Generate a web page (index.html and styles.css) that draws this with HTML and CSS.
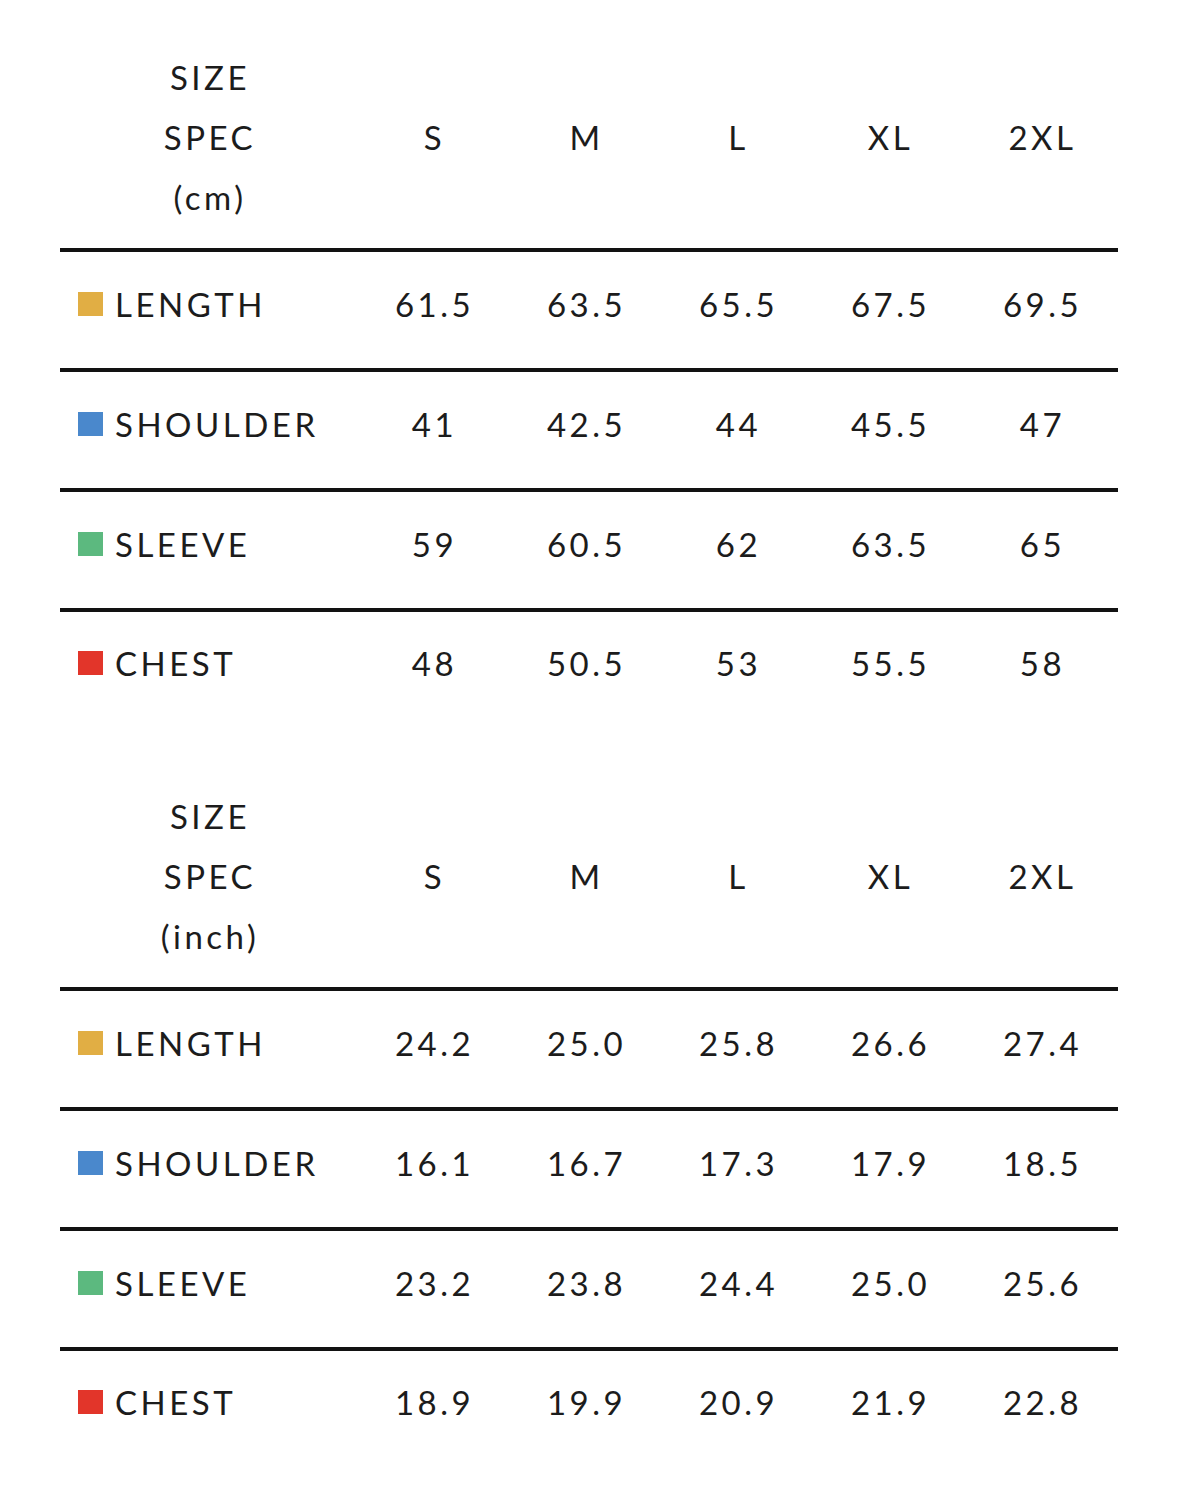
FILE: index.html
```html
<!DOCTYPE html>
<html>
<head>
<meta charset="utf-8">
<link rel="stylesheet" href="styles.css">
</head>
<body>
<div class="page">
  <section class="spec spec-cm">
    <div class="head">
      <div class="title"><span>SIZE</span><span>SPEC</span><span>(cm)</span></div>
      <div class="c">S</div><div class="c">M</div><div class="c">L</div><div class="c">XL</div><div class="c">2XL</div>
    </div>
    <div class="row"><div class="label"><i class="sw yellow"></i>LENGTH</div><div class="c">61.5</div><div class="c">63.5</div><div class="c">65.5</div><div class="c">67.5</div><div class="c">69.5</div></div>
    <div class="row"><div class="label"><i class="sw blue"></i>SHOULDER</div><div class="c">41</div><div class="c">42.5</div><div class="c">44</div><div class="c">45.5</div><div class="c">47</div></div>
    <div class="row"><div class="label"><i class="sw green"></i>SLEEVE</div><div class="c">59</div><div class="c">60.5</div><div class="c">62</div><div class="c">63.5</div><div class="c">65</div></div>
    <div class="row"><div class="label"><i class="sw red"></i>CHEST</div><div class="c">48</div><div class="c">50.5</div><div class="c">53</div><div class="c">55.5</div><div class="c">58</div></div>
  </section>
  <section class="spec spec-inch">
    <div class="head">
      <div class="title"><span>SIZE</span><span>SPEC</span><span>(inch)</span></div>
      <div class="c">S</div><div class="c">M</div><div class="c">L</div><div class="c">XL</div><div class="c">2XL</div>
    </div>
    <div class="row"><div class="label"><i class="sw yellow"></i>LENGTH</div><div class="c">24.2</div><div class="c">25.0</div><div class="c">25.8</div><div class="c">26.6</div><div class="c">27.4</div></div>
    <div class="row"><div class="label"><i class="sw blue"></i>SHOULDER</div><div class="c">16.1</div><div class="c">16.7</div><div class="c">17.3</div><div class="c">17.9</div><div class="c">18.5</div></div>
    <div class="row"><div class="label"><i class="sw green"></i>SLEEVE</div><div class="c">23.2</div><div class="c">23.8</div><div class="c">24.4</div><div class="c">25.0</div><div class="c">25.6</div></div>
    <div class="row"><div class="label"><i class="sw red"></i>CHEST</div><div class="c">18.9</div><div class="c">19.9</div><div class="c">20.9</div><div class="c">21.9</div><div class="c">22.8</div></div>
  </section>
</div>
</body>
</html>
```
FILE: styles.css
```css
html, body {
  margin: 0;
  padding: 0;
  background: #ffffff;
}
.page {
  width: 1179px;
  height: 1504px;
  padding-left: 60px;
  box-sizing: border-box;
  font-family: Lato, "Open Sans", sans-serif;
  font-size: 33px;
  letter-spacing: 3.5px;
  color: #1c1c1c;
}
.spec {
  width: 1058px;
}
.head,
.row {
  display: grid;
  grid-template-columns: 297px repeat(5, 152px);
  align-items: center;
}
.spec-cm .head {
  padding-top: 47px;
  padding-bottom: 21px;
}
.spec-inch .head {
  padding-top: 58px;
  padding-bottom: 21px;
}
.title {
  display: flex;
  flex-direction: column;
  align-items: center;
}
.title span,
.head .c {
  line-height: 60px;
  padding-left: 3px;
}
.c {
  text-align: center;
  padding-left: 3px;
}
.row {
  height: 120px;
  box-sizing: border-box;
  border-top: 4px solid #121212;
  padding-bottom: 12px;
}
.row:last-child {
  padding-bottom: 14px;
}
.label {
  display: flex;
  align-items: center;
  padding-left: 18px;
}
.sw {
  display: inline-block;
  flex: none;
  width: 25px;
  height: 24px;
  margin-right: 12px;
}
.yellow { background: #e1ae44; }
.blue { background: #4a88cc; }
.green { background: #5cb97f; }
.red { background: #e2352a; }
```
